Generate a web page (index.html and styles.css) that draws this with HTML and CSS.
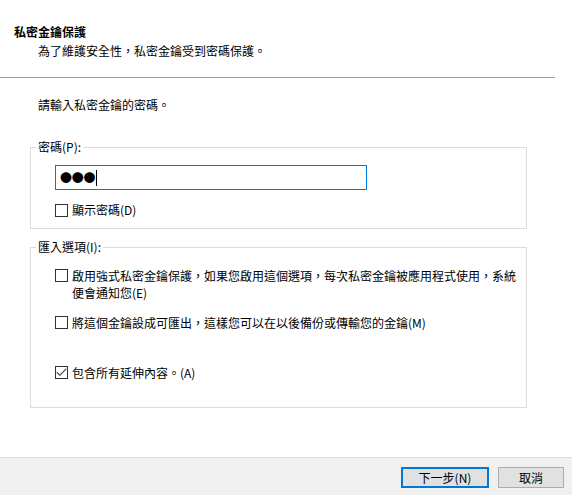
FILE: index.html
```html
<!DOCTYPE html>
<html lang="zh-Hant">
<head>
<meta charset="utf-8">
<title>私密金鑰保護</title>
<link rel="stylesheet" href="styles.css">
</head>
<body>
  <div class="dialog">
    <div class="header">
      <div class="title">私密金鑰保護</div>
      <div class="subtitle">為了維護安全性，私密金鑰受到密碼保護。</div>
    </div>
    <div class="separator"></div>

    <div class="content">
      <div class="intro">請輸入私密金鑰的密碼。</div>

      <fieldset class="group group-password">
        <legend>密碼(P):</legend>
        <div class="group-body">
          <div class="pw-field"><span class="dots">●●●</span><span class="caret"></span></div>
          <label class="check check-show">
            <span class="box"></span>
            <span class="check-text">顯示密碼(D)</span>
          </label>
        </div>
      </fieldset>

      <fieldset class="group group-options">
        <legend>匯入選項(I):</legend>
        <div class="group-body">
          <label class="check row-1">
            <span class="box"></span>
            <span class="check-text">啟用強式私密金鑰保護，如果您啟用這個選項，每次私密金鑰被應用程式使用，系統便會通知您(E)</span>
          </label>
          <label class="check row-2">
            <span class="box"></span>
            <span class="check-text">將這個金鑰設成可匯出，這樣您可以在以後備份或傳輸您的金鑰(M)</span>
          </label>
          <label class="check row-3">
            <span class="box checked"><svg viewBox="0 0 11 11" width="11" height="11"><polyline points="0.8,5.3 3.8,8.3 10.2,1.9" fill="none" stroke="#333" stroke-width="1.1"/></svg></span>
            <span class="check-text">包含所有延伸內容。(A)</span>
          </label>
        </div>
      </fieldset>
    </div>

    <div class="footer">
      <button class="btn btn-default">下一步(N)</button>
      <button class="btn">取消</button>
    </div>
  </div>
</body>
</html>
```

FILE: styles.css
```css
html, body {
  margin: 0;
  padding: 0;
  background: #ffffff;
}

body {
  font-family: "Noto Sans CJK TC", "Noto Sans", sans-serif;
  font-size: 12px;
  line-height: 16px;
  color: #000000;
}

.dialog {
  width: 572px;
  height: 495px;
  display: flex;
  flex-direction: column;
  overflow: hidden;
}

.header {
  height: 77px;
  box-sizing: border-box;
  padding: 24px 0 0 14px;
}

.title {
  font-weight: bold;
}

.subtitle {
  margin-top: 3px;
  padding-left: 24px;
}

.separator {
  width: 555px;
  height: 1px;
  background: #a0a0a0;
}

.content {
  flex: 1;
  padding-left: 30px;
}

.intro {
  margin-top: 19px;
  padding-left: 8px;
}

.group {
  width: 497px;
  box-sizing: border-box;
  margin: 0;
  border: 1px solid #dcdcdc;
  padding: 0 0 0 5px;
  min-width: 0;
}

.group legend {
  padding: 0 2px;
  line-height: 16px;
}

.group-body {
  padding-left: 19px;
}

.group-password {
  margin-top: 26px;
  padding-bottom: 10px;
}

.group-options {
  margin-top: 10px;
  padding-bottom: 26px;
}

.pw-field {
  margin-top: 10px;
  width: 312px;
  height: 25px;
  box-sizing: border-box;
  border: 1px solid #0078d7;
  padding-left: 4px;
  display: flex;
  align-items: center;
}

.dots {
  font-size: 12px;
  line-height: 16px;
  letter-spacing: -0.3px;
}

.caret {
  display: inline-block;
  width: 1px;
  height: 16px;
  background: #000;
  margin-left: 1px;
}

.check {
  display: flex;
  align-items: flex-start;
  line-height: 17px;
}

.check-show {
  margin-top: 12px;
  line-height: 16px;
}

.box {
  flex: none;
  width: 13px;
  height: 13px;
  box-sizing: border-box;
  border: 1px solid #333333;
  background: #ffffff;
  margin-top: 2px;
  margin-right: 4px;
  display: flex;
  align-items: center;
  justify-content: center;
}

.check-show .box {
  margin-top: 2px;
}

.check-text {
  width: 450px;
}

.row-1 {
  margin-top: 12px;
}

.row-2 {
  margin-top: 13px;
}

.row-3 {
  margin-top: 33px;
}

.footer {
  height: 38px;
  box-sizing: border-box;
  border-top: 1px solid #dfdfdf;
  background: #f0f0f0;
  display: flex;
  justify-content: flex-end;
  align-items: flex-start;
  gap: 9px;
  padding: 9px 8px 0 0;
}

.btn {
  font-family: inherit;
  font-size: 12px;
  line-height: 16px;
  color: #000;
  height: 21px;
  width: 66px;
  box-sizing: border-box;
  padding: 0;
  margin: 0;
  background: #e1e1e1;
  border: 1px solid #adadad;
  border-radius: 0;
}

.btn-default {
  width: 88px;
  border: 2px solid #0078d7;
}
```
